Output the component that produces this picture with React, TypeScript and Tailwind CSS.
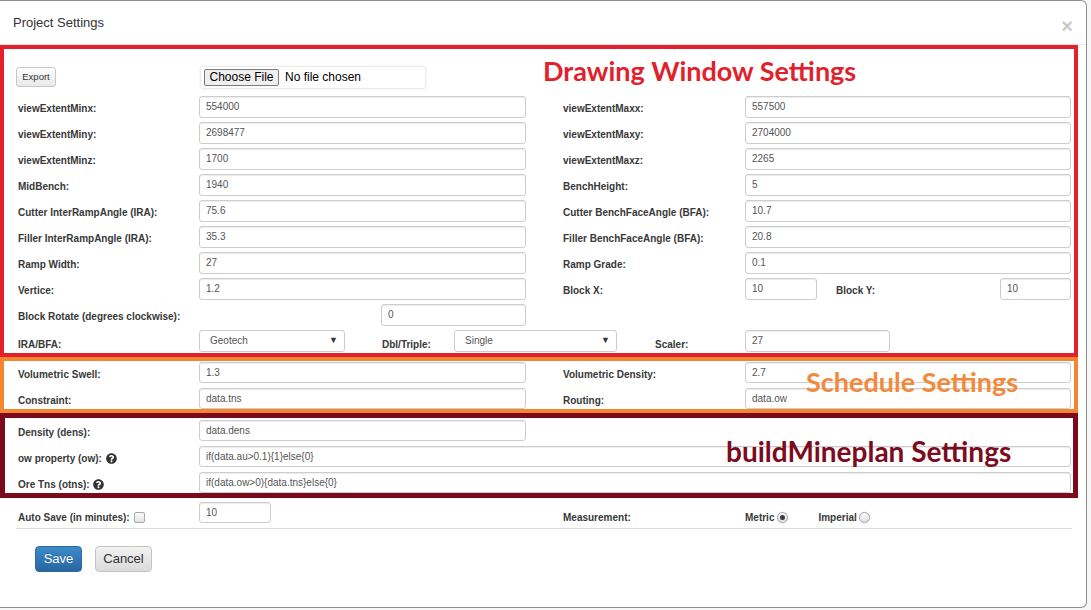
import React from "react";
import { FaQuestionCircle } from "react-icons/fa";

function Field({ value, w, h }: { value: string; w: string; h: string }) {
  return (
    <div
      className={`${w} ${h} shrink-0 border border-[#cdcdcd] rounded-[3px] bg-white shadow-[inset_0_1px_1px_rgba(0,0,0,0.075)] pl-[6px] flex items-center text-[10px] text-[#555]`}
    >
      <span className="-mt-[1px]">{value}</span>
    </div>
  );
}

function Label({ w, children }: { w: string; children: React.ReactNode }) {
  return (
    <div className={`${w} shrink-0 self-stretch flex items-center pt-[3px] text-[10px] font-bold text-[#383838] whitespace-nowrap`}>
      {children}
    </div>
  );
}

function Select({ value, w }: { value: string; w: string }) {
  return (
    <div
      className={`${w} h-[22px] shrink-0 border border-[#cdcdcd] rounded-[3px] bg-white pl-[10px] pr-[6px] flex items-center justify-between text-[10px] text-[#555]`}
    >
      <span className="-mt-[2px]">{value}</span>
      <span className="text-[9px] text-[#333]">▼</span>
    </div>
  );
}

function Gap({ w }: { w: string }) {
  return <div className={`${w} shrink-0`} />;
}

function Pair({
  l1,
  v1,
  l2,
  v2,
  h = "h-[22px]",
}: {
  l1: React.ReactNode;
  v1: string;
  l2?: string;
  v2?: string;
  h?: string;
}) {
  return (
    <div className={`flex items-center ${h}`}>
      <Label w="w-[181px]">{l1}</Label>
      <Field value={v1} w="w-[327px]" h={h} />
      {l2 !== undefined && (
        <>
          <Gap w="w-[37px]" />
          <Label w="w-[182px]">{l2}</Label>
          <Field value={v2 || ""} w="w-[326px]" h={h} />
        </>
      )}
    </div>
  );
}

function Radio({ checked }: { checked?: boolean }) {
  return (
    <span className="inline-flex w-[11px] h-[11px] rounded-full border border-[#a3a3a3] bg-gradient-to-b from-[#fbfbfb] to-[#e2e2e2] items-center justify-center shadow-[0_0_2px_rgba(0,0,0,0.15)]">
      {checked && <span className="w-[5px] h-[5px] rounded-full bg-[#3b3b3b]" />}
    </span>
  );
}

export default function App() {
  return (
    <div className="w-[1091px] h-[610px] bg-[#f7f7f7] overflow-hidden font-['Liberation_Sans',Arial,sans-serif]">
      <div className="w-[1087px] h-[608px] bg-white border-t border-r border-b border-[#8e8e8e] rounded-r-[6px] flex flex-col">
        {/* header */}
        <div className="h-[44px] shrink-0 flex items-center justify-between pl-[13px] pr-[13px] border-b border-[#e5e5e5]">
          <span className="text-[13px] text-[#333]">Project Settings</span>
          <span className="text-[20px] font-bold text-[#c9c9c9] leading-none mt-[6px]">×</span>
        </div>

        {/* Drawing Window Settings */}
        <div className="w-[1078px] border-[4px] border-[#e2212c] pl-[14px] pr-[3px] pt-[16px] pb-[1px] flex flex-col">
          <div className="flex items-center h-[24px] mb-[7px]">
            <div className="w-[182px] shrink-0 flex items-center">
              <div className="-ml-[2px] w-[40px] h-[20px] border border-[#c8c8c8] rounded-[3px] bg-gradient-to-b from-[#fdfdfd] to-[#e9e9e9] flex items-center justify-center text-[9.5px] text-[#333]">
                Export
              </div>
            </div>
            <div className="w-[226px] h-[23px] shrink-0 border border-[#ececec] rounded-[3px] shadow-[0_0_3px_rgba(0,0,0,0.08)] flex items-center">
              <div className="ml-[3px] w-[75px] h-[17px] border border-[#7b7b7b] rounded-[2px] bg-[#efefef] flex items-center justify-center text-[12px] text-black">
                Choose File
              </div>
              <span className="ml-[6px] text-[12px] text-black">No file chosen</span>
            </div>
            <div className="ml-[117px] self-start -mt-[8px] font-['Lato',sans-serif] font-bold text-[27px] leading-[27px] text-[#e1222d] whitespace-nowrap">
              Drawing Window Settings
            </div>
          </div>
          <div className="flex flex-col gap-[4px]">
            <Pair l1="viewExtentMinx:" v1="554000" l2="viewExtentMaxx:" v2="557500" />
            <Pair l1="viewExtentMiny:" v1="2698477" l2="viewExtentMaxy:" v2="2704000" />
            <Pair l1="viewExtentMinz:" v1="1700" l2="viewExtentMaxz:" v2="2265" />
            <Pair l1="MidBench:" v1="1940" l2="BenchHeight:" v2="5" />
            <Pair l1="Cutter InterRampAngle (IRA):" v1="75.6" l2="Cutter BenchFaceAngle (BFA):" v2="10.7" />
            <Pair l1="Filler InterRampAngle (IRA):" v1="35.3" l2="Filler BenchFaceAngle (BFA):" v2="20.8" />
            <Pair l1="Ramp Width:" v1="27" l2="Ramp Grade:" v2="0.1" />
            <div className="flex items-center h-[22px]">
              <Label w="w-[181px]">Vertice:</Label>
              <Field value="1.2" w="w-[327px]" h="h-[22px]" />
              <Gap w="w-[37px]" />
              <Label w="w-[182px]">Block X:</Label>
              <Field value="10" w="w-[72px]" h="h-[22px]" />
              <Gap w="w-[19px]" />
              <Label w="w-[164px]">Block Y:</Label>
              <Field value="10" w="w-[71px]" h="h-[22px]" />
            </div>
            <div className="flex items-center h-[22px]">
              <Label w="w-[363px]">Block Rotate (degrees clockwise):</Label>
              <Field value="0" w="w-[145px]" h="h-[22px]" />
            </div>
            <div className="flex items-center h-[22px]">
              <Label w="w-[181px]">
                <span className="mt-[3px]">IRA/BFA:</span>
              </Label>
              <Select value="Geotech" w="w-[146px]" />
              <Gap w="w-[37px]" />
              <Label w="w-[72px]">
                <span className="mt-[3px]">Dbl/Triple:</span>
              </Label>
              <Select value="Single" w="w-[163px]" />
              <Gap w="w-[38px]" />
              <Label w="w-[90px]">
                <span className="mt-[3px]">Scaler:</span>
              </Label>
              <Field value="27" w="w-[145px]" h="h-[22px]" />
            </div>
          </div>
        </div>

        {/* Schedule Settings */}
        <div className="relative w-[1078px] border-[4px] border-[#f5852f] pl-[14px] pr-[3px] pt-[1px] flex flex-col gap-[5px]">
          <Pair l1="Volumetric Swell:" v1="1.3" l2="Volumetric Density:" v2="2.7" h="h-[21px]" />
          <Pair l1="Constraint:" v1="data.tns" l2="Routing:" v2="data.ow" h="h-[21px]" />
          <div className="absolute left-[802px] top-[7px] font-['Lato',sans-serif] font-bold text-[27px] leading-[27px] text-[#f28a3b] whitespace-nowrap">
            Schedule Settings
          </div>
        </div>

        {/* buildMineplan Settings */}
        <div className="relative w-[1078px] border-[5px] border-[#7b0a1d] pl-[13px] pr-[2px] pt-[2px] flex flex-col gap-[5px]">
          <Pair l1="Density (dens):" v1="data.dens" h="h-[21px]" />
          <div className="flex items-center h-[21px]">
            <Label w="w-[181px]">
              ow property (ow):
              <FaQuestionCircle className="ml-[4px] text-[#333]" size={11} />
            </Label>
            <Field value="if(data.au>0.1){1}else{0}" w="w-[872px]" h="h-[21px]" />
          </div>
          <div className="flex items-center h-[21px]">
            <Label w="w-[181px]">
              Ore Tns (otns):
              <FaQuestionCircle className="ml-[3px] text-[#333]" size={11} />
            </Label>
            <Field value="if(data.ow>0){data.tns}else{0}" w="w-[872px]" h="h-[21px]" />
          </div>
          <div className="absolute left-[721px] top-[19px] font-['Lato',sans-serif] font-bold text-[28px] leading-[28px] text-[#7c0b1e] whitespace-nowrap">
            buildMineplan Settings
          </div>
        </div>

        {/* Auto save row */}
        <div className="flex items-center h-[21px] mt-[4px] pl-[18px]">
          <Label w="w-[181px]">
            <span className="mt-[6px] flex items-center">
              Auto Save (in minutes):
              <span className="ml-[4px] inline-block w-[11px] h-[11px] border border-[#a8a8a8] rounded-[2px] bg-gradient-to-b from-[#fafafa] to-[#e4e4e4]" />
            </span>
          </Label>
          <Field value="10" w="w-[72px]" h="h-[21px]" />
          <Gap w="w-[292px]" />
          <Label w="w-[182px]">
            <span className="mt-[6px]">Measurement:</span>
          </Label>
          <Label w="w-[200px]">
            <span className="mt-[6px] flex items-center">
              Metric
              <span className="ml-[3px] flex">
                <Radio checked />
              </span>
              <span className="ml-[30px]">Imperial</span>
              <span className="ml-[2px] flex">
                <Radio />
              </span>
            </span>
          </Label>
        </div>

        <div className="ml-[16px] w-[1056px] mt-[5px] border-t border-[#dedede]" />

        <div className="flex items-center pl-[35px] mt-[17px] gap-[13px]">
          <div className="w-[47px] h-[26px] rounded-[4px] border border-[#2b6aa2] bg-gradient-to-b from-[#3d8bcc] to-[#2866a0] flex items-center justify-center text-[13px] text-white [text-shadow:0_-1px_0_rgba(0,0,0,0.2)]">
            Save
          </div>
          <div className="w-[57px] h-[26px] rounded-[4px] border border-[#c4c4c4] bg-gradient-to-b from-[#f2f2f2] to-[#dadada] flex items-center justify-center text-[13px] text-[#333]">
            Cancel
          </div>
        </div>
      </div>
    </div>
  );
}
